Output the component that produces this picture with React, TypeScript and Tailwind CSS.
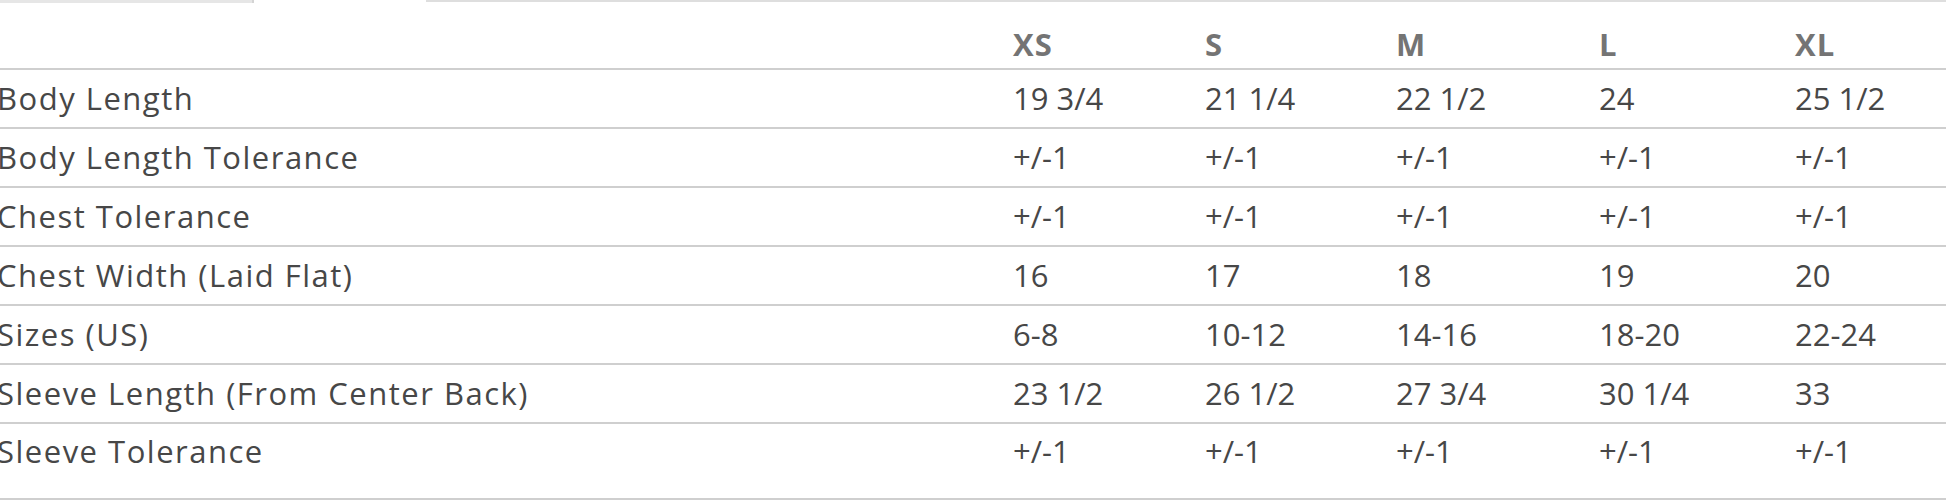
const sizes = ["XS", "S", "M", "L", "XL"];

const rows: { label: string; values: string[] }[] = [
  { label: "Body Length", values: ["19 3/4", "21 1/4", "22 1/2", "24", "25 1/2"] },
  { label: "Body Length Tolerance", values: ["+/-1", "+/-1", "+/-1", "+/-1", "+/-1"] },
  { label: "Chest Tolerance", values: ["+/-1", "+/-1", "+/-1", "+/-1", "+/-1"] },
  { label: "Chest Width (Laid Flat)", values: ["16", "17", "18", "19", "20"] },
  { label: "Sizes (US)", values: ["6-8", "10-12", "14-16", "18-20", "22-24"] },
  { label: "Sleeve Length (From Center Back)", values: ["23 1/2", "26 1/2", "27 3/4", "30 1/4", "33"] },
  { label: "Sleeve Tolerance", values: ["+/-1", "+/-1", "+/-1", "+/-1", "+/-1"] },
];

const cols = "grid grid-cols-[1016px_192px_191px_203px_196px_1fr]";

export default function App() {
  return (
    <div
      className="w-[1946px] h-[501px] overflow-hidden bg-white"
      style={{ fontFamily: '"Open Sans", sans-serif' }}
    >
      {/* tabs strip */}
      <div className="flex h-[3px]">
        <div className="w-[254px] bg-[#e6e6e6] border-r-2 border-[#d4d4d4]"></div>
        <div className="w-[172px]"></div>
        <div className="flex-1 border-t-2 border-[#dedede]"></div>
      </div>

      <div className="-ml-[3px] text-[31px] text-[#474747]">
        {/* header */}
        <div className={`${cols} h-[65px] items-center pt-[18px]`}>
          <div></div>
          {sizes.map((s) => (
            <div key={s} className="font-bold text-[#747474] tracking-[1px]">
              {s}
            </div>
          ))}
          <div></div>
        </div>

        {rows.map((r, i) => (
          <div
            key={r.label}
            className={`${cols} items-center border-t-2 border-[#cfcfcf] ${
              i === rows.length - 1 ? "h-[78px] pt-[3px] pb-[19px] border-b-2" : "h-[59px] pt-[3px]"
            }`}
          >
            <div className="whitespace-nowrap tracking-[1.5px]">{r.label}</div>
            {r.values.map((v, j) => (
              <div key={j} className="whitespace-nowrap">
                {v}
              </div>
            ))}
            <div></div>
          </div>
        ))}
      </div>
    </div>
  );
}
